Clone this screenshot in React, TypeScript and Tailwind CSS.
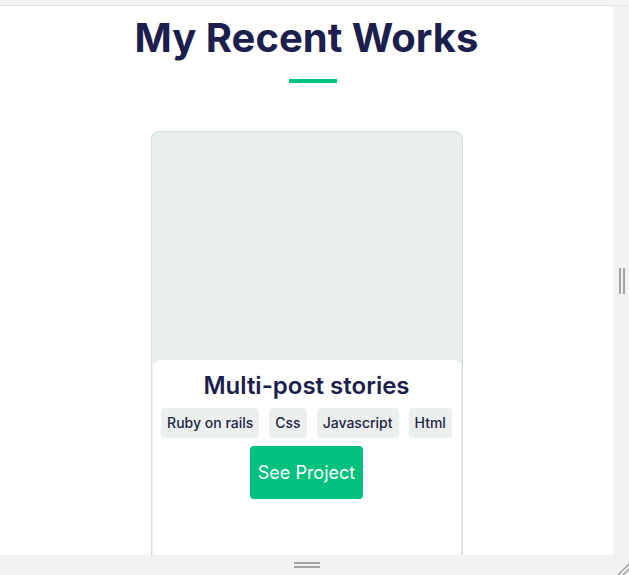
import React from 'react';

const tags = ['Ruby on rails', 'Css', 'Javascript', 'Html'];

const ProjectCard: React.FC<{ title: string; tags: string[] }> = ({ title, tags }) => {
  return (
    <div className="w-[312px] shrink-0 rounded-lg border border-[#cfdcd8] bg-[#e9efed] px-px pb-px">
      <div className="h-[228px]" />
      <div className="flex flex-col items-center rounded-t-lg bg-white pt-[10px] pb-16">
        <h3 className="text-[24px] leading-8 font-semibold text-[#1c1f4d]">{title}</h3>
        <ul className="mt-[6px] flex gap-[10px]">
          {tags.map((tag) => (
            <li
              key={tag}
              className="rounded bg-[#ebf0ef] px-1.5 py-[5px] text-[14px] leading-5 font-medium text-[#1f2547]"
            >
              {tag}
            </li>
          ))}
        </ul>
        <button className="mt-2 h-[53px] rounded bg-[#00c17e] px-2 text-[18px] leading-7 text-white">
          See Project
        </button>
      </div>
    </div>
  );
};

export default function App() {
  return (
    <div
      className="flex h-[575px] w-[629px] flex-col overflow-hidden bg-[#f1f2f4]"
      style={{ fontFamily: 'Inter, "Noto Sans", sans-serif' }}
    >
      <div className="h-[6px] shrink-0 border-b border-[#e1e2e4] bg-[#f3f4f5]" />
      <div className="flex min-h-0 flex-1">
        <main className="w-[613px] shrink-0 overflow-hidden bg-white">
          <section className="flex flex-col items-center pt-[8px]">
            <h2 className="text-[40px] leading-[48px] font-bold text-[#1c1f4d]">My Recent Works</h2>
            <span className="mt-[17px] ml-[13px] h-1 w-12 bg-[#00c17e]" />
            <div className="mt-12">
              <ProjectCard title="Multi-post stories" tags={tags} />
            </div>
          </section>
        </main>
        <div className="flex flex-1 items-center justify-center pl-[2px]">
          <div className="flex h-[26px] gap-[2px]">
            <span className="w-[2px] bg-[#a3a3a3]" />
            <span className="w-[2px] bg-[#a3a3a3]" />
          </div>
        </div>
      </div>
      <div className="relative flex h-[20px] shrink-0 items-center justify-center pr-[16px]">
        <div className="flex w-[26px] flex-col gap-[2px]">
          <span className="h-[2px] bg-[#a3a3a3]" />
          <span className="h-[2px] bg-[#a3a3a3]" />
        </div>
        <svg className="absolute right-0 bottom-0" width="13" height="13" viewBox="0 0 13 13">
          <line x1="2" y1="13" x2="13" y2="2" stroke="#9a9a9a" strokeWidth="1.3" />
          <line x1="7" y1="13" x2="13" y2="7" stroke="#9a9a9a" strokeWidth="1.3" />
        </svg>
      </div>
    </div>
  );
}
